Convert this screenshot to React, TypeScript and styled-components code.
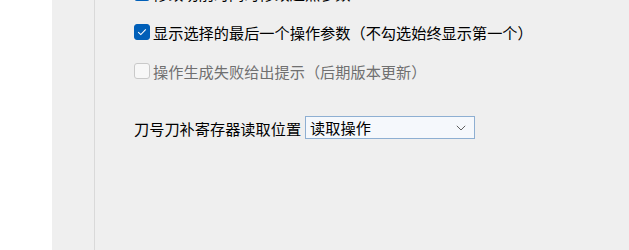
import React from "react";
import styled, { createGlobalStyle } from "styled-components";

const Global = createGlobalStyle`
  html, body { margin: 0; padding: 0; background: #ffffff; }
  body { font-family: "Noto Sans CJK SC", "Noto Sans", sans-serif; }
`;

const Page = styled.div`
  display: flex;
  width: 629px;
  height: 250px;
  overflow: hidden;
`;

const WhiteStrip = styled.div`
  width: 52px;
  flex: none;
  background: #ffffff;
`;

const Panel = styled.div`
  flex: 1;
  display: flex;
  background: #efefef;
`;

const Gutter = styled.div`
  width: 42px;
  flex: none;
  border-right: 1px solid #d9d9d9;
`;

const Content = styled.div`
  flex: 1;
  display: flex;
  flex-direction: column;
  padding-left: 39px;
  margin-top: -15px;
`;

const CheckList = styled.div`
  display: flex;
  flex-direction: column;
  gap: 23px;
`;

const CheckRow = styled.label<{ $disabled?: boolean }>`
  display: flex;
  align-items: center;
  gap: 3px;
  height: 16px;
  font-size: 15.2px;
  line-height: 16px;
  white-space: nowrap;
  color: ${(p) => (p.$disabled ? "#707070" : "#000000")};
`;

const Box = styled.span<{ $checked?: boolean }>`
  width: 16px;
  height: 16px;
  box-sizing: border-box;
  border-radius: 3px;
  flex: none;
  display: flex;
  align-items: center;
  justify-content: center;
  background: ${(p) => (p.$checked ? "#005fb8" : "#f7f7f7")};
  border: 1px solid ${(p) => (p.$checked ? "#005fb8" : "#c9c9c9")};
`;

const FieldRow = styled.div`
  display: flex;
  align-items: center;
  gap: 4px;
  margin-top: 37px;
  height: 23px;
  font-size: 15.2px;
  color: #000000;
  white-space: nowrap;
`;

const Select = styled.div`
  width: 170px;
  height: 23px;
  box-sizing: border-box;
  border: 1px solid #8eafd2;
  background: #f5f8fc;
  display: flex;
  align-items: center;
  justify-content: space-between;
  padding: 0 8px 0 4px;
  font-size: 15.2px;
  line-height: 21px;
`;

const Check = () => (
  <svg width="10" height="8" viewBox="0 0 10 8">
    <path d="M1.2 4.2 L3.8 6.6 L8.8 1.4" fill="none" stroke="#ffffff" strokeWidth="1.1" />
  </svg>
);

const Chevron = () => (
  <svg width="10" height="6" viewBox="0 0 10 6">
    <path d="M0.8 0.8 L5 5 L9.2 0.8" fill="none" stroke="#606060" strokeWidth="1" />
  </svg>
);

export default function App() {
  return (
    <>
      <Global />
      <Page>
        <WhiteStrip />
        <Panel>
          <Gutter />
          <Content>
            <CheckList>
              <CheckRow>
                <Box $checked>
                  <Check />
                </Box>
                修改切削时同时修改起点参数
              </CheckRow>
              <CheckRow>
                <Box $checked>
                  <Check />
                </Box>
                显示选择的最后一个操作参数（不勾选始终显示第一个）
              </CheckRow>
              <CheckRow $disabled>
                <Box />
                操作生成失败给出提示（后期版本更新）
              </CheckRow>
            </CheckList>
            <FieldRow>
              刀号刀补寄存器读取位置
              <Select>
                读取操作
                <Chevron />
              </Select>
            </FieldRow>
          </Content>
        </Panel>
      </Page>
    </>
  );
}
